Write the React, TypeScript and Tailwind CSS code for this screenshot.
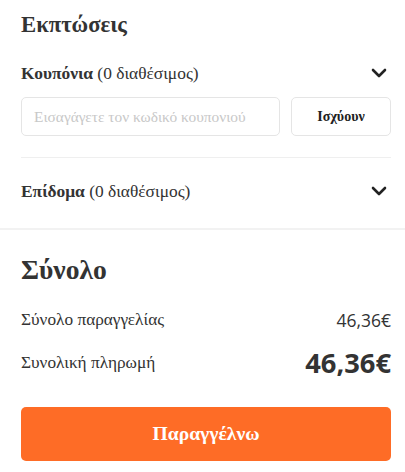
import React from "react";

const Chevron = () => (
  <svg width="16" height="10" viewBox="0 0 16 10" fill="none">
    <path d="M2 2l6 6 6-6" stroke="#222" strokeWidth="2.6" strokeLinecap="round" strokeLinejoin="round" />
  </svg>
);

export default function App() {
  const serif = { fontFamily: '"Liberation Serif", "Times New Roman", serif' };
  const sans = { fontFamily: '"Open Sans", sans-serif' };
  return (
    <div className="w-[405px] h-[472px] bg-white text-[#333] overflow-hidden" style={serif}>
      <div className="px-[21px] pr-[14px]">
        <h2 className="pt-[9px] text-[22.7px] font-bold leading-[32px] text-[#333]">Εκπτώσεις</h2>
        <div className="mt-[21px] flex items-center justify-between h-[22px]">
          <div className="text-[17.4px] text-[#333]">
            <span className="font-bold">Κουπόνια</span> (0 διαθέσιμος)
          </div>
          <div className="pr-[4px]"><Chevron /></div>
        </div>
        <div className="mt-[13px] flex gap-[11px]">
          <input
            className="w-[259px] h-[39px] rounded-[5px] border border-[#e5e5e5] px-[12px] text-[15.4px] placeholder:text-[#c8c8c8] outline-none"
            style={serif}
            placeholder="Εισαγάγετε τον κωδικό κουπονιού"
          />
          <button className="flex-1 h-[39px] rounded-[5px] border border-[#e5e5e5] text-[14px] font-bold text-[#222]" style={serif}>
            Ισχύουν
          </button>
        </div>
        <div className="mt-[21px] h-px bg-[#efefef]" />
        <div className="mt-[22px] flex items-center justify-between h-[22px]">
          <div className="text-[17.4px] text-[#333]">
            <span className="font-bold">Επίδομα</span> (0 διαθέσιμος)
          </div>
          <div className="pr-[4px]"><Chevron /></div>
        </div>
      </div>
      <div className="mt-[26px] h-[2px] bg-[#f2f2f2]" />
      <div className="px-[21px] pr-[14px]">
        <h2 className="mt-[24px] text-[27.6px] font-bold leading-[32px] text-[#333]">Σύνολο</h2>
        <div className="mt-[22px] flex items-center justify-between h-[24px]">
          <span className="text-[17.3px] text-[#333]">Σύνολο παραγγελίας</span>
          <span className="text-[17.5px] text-[#333]" style={sans}>46,36€</span>
        </div>
        <div className="mt-[14px] flex items-center justify-between h-[34px]">
          <span className="text-[17.3px] text-[#333]">Συνολική πληρωμή</span>
          <span className="text-[27.3px] font-bold text-[#333]" style={sans}>46,36€</span>
        </div>
        <button className="mt-[27px] w-full h-[54px] rounded-[5px] bg-[#fe6c26] text-white text-[19.6px] font-bold" style={serif}>
          Παραγγέλνω
        </button>
      </div>
    </div>
  );
}
